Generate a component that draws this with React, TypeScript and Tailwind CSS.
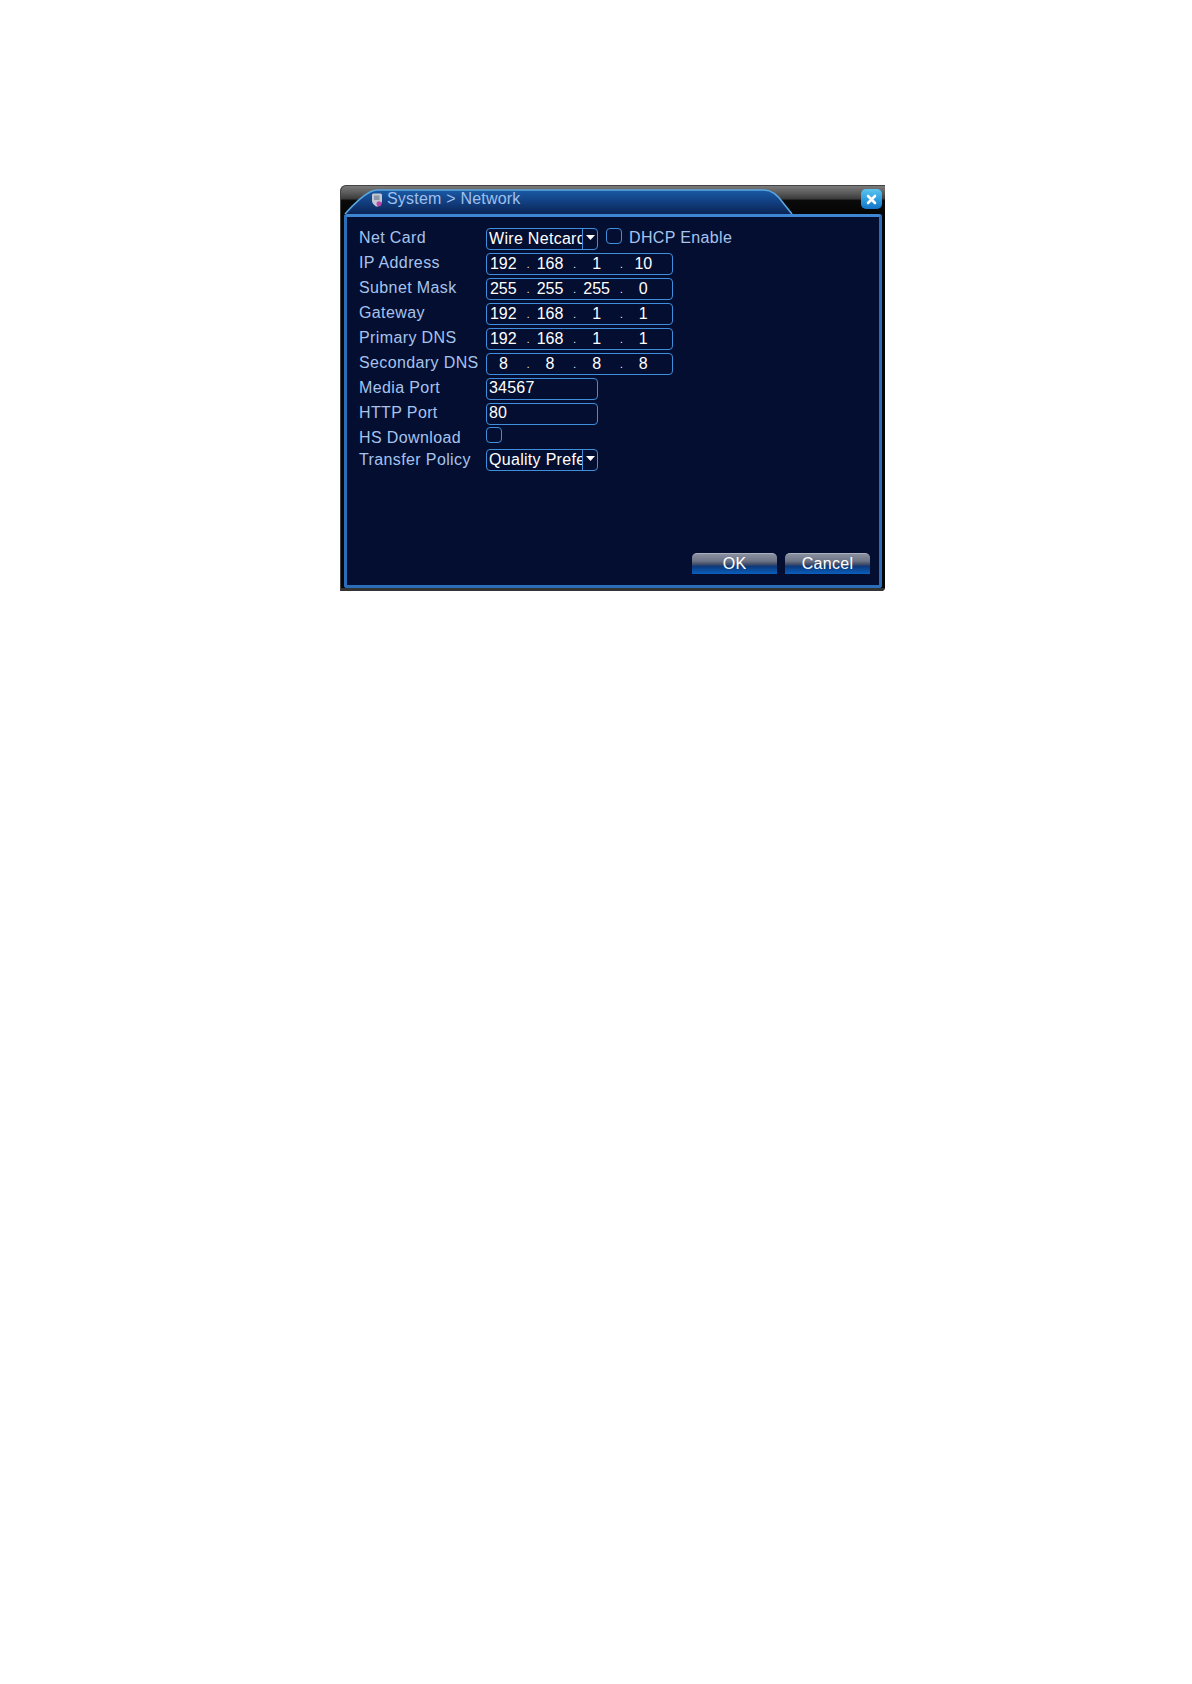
import React from "react";

const labelCls = "w-[127px] shrink-0 text-[16px] leading-[20px] tracking-[0.38px] text-[#a6c3ee] whitespace-nowrap";
const fieldCls = "h-[22px] rounded-[4px] border-[1.5px] border-[#3f8fdc] pb-[2px] text-[16px] leading-[17px] text-white";

function Select({ value }: { value: string }) {
  return (
    <div className={`${fieldCls} flex w-[112px] shrink-0 items-center`}>
      <div className="min-w-0 flex-1 overflow-hidden whitespace-nowrap pl-[2px] tracking-[0.3px]">{value}</div>
      <div className="flex h-[21px] w-[15px] shrink-0 items-center justify-center border-l border-[#3f8fdc] pb-[1px]">
        <svg width="9" height="5" viewBox="0 0 9 5"><path d="M0 0h9L4.5 5z" fill="#ffffff" /></svg>
      </div>
    </div>
  );
}

function Ip({ parts }: { parts: string[] }) {
  return (
    <div className={`${fieldCls} flex w-[187px] items-center`}>
      {parts.map((p, i) => (
        <React.Fragment key={i}>
          <div className={`w-[46.67px] shrink-0 text-center ${i === 0 ? "-ml-[7px]" : ""}`}>{p}</div>
          {i < 3 && <div className="w-0 overflow-visible pt-[4px] text-center text-[10px] leading-[14px]">.</div>}
        </React.Fragment>
      ))}
    </div>
  );
}

function Port({ value }: { value: string }) {
  return <div className={`${fieldCls} w-[112px] pl-[2px] tracking-[0.2px]`}>{value}</div>;
}

function Row({ label, children, h = "h-[22px]", labelPad = "pb-[2px]" }: { label: string; children: React.ReactNode; h?: string; labelPad?: string }) {
  return (
    <div className={`flex items-center ${h}`}>
      <div className={`${labelCls} ${labelPad}`}>{label}</div>
      {children}
    </div>
  );
}

function Check() {
  return <div className="h-[16px] w-[16px] shrink-0 rounded-[4px] border-[1.5px] border-[#3f8fdc]" />;
}

function Button({ children }: { children: React.ReactNode }) {
  return (
    <div className="h-[21px] w-[85px] rounded-t-[5px] border-t border-[#aab0bd] bg-[linear-gradient(180deg,#8a90a0_0%,#6d7487_35%,#3e4c68_52%,#0c3a7c_62%,#0a5fbe_100%)] pt-[1px] text-center text-[16px] leading-[18px] tracking-[0.3px] text-white">
      {children}
    </div>
  );
}

export default function App() {
  return (
    <div className="min-h-[1684px] bg-white pl-[340px] pt-[185px]" style={{ fontFamily: '"Liberation Sans", Arial, sans-serif' }}>
      <div className="flex h-[406px] w-[545px] flex-col overflow-hidden rounded-tl-[6px] rounded-br-[4px] border-l border-t border-[#444] bg-[#050505]">
        <div className="relative h-[28px] shrink-0 bg-[linear-gradient(180deg,#7a7a7a_0%,#5a5a5a_25%,#3c3c3c_45%,#0a0a0a_52%,#050505_100%)]">
          <svg className="absolute left-0 top-0" width="544" height="28" viewBox="0 0 544 28">
            <defs>
              <linearGradient id="tab" x1="0" y1="0" x2="0" y2="1">
                <stop offset="0" stopColor="#1a5aa6" />
                <stop offset="0.5" stopColor="#123f80" />
                <stop offset="1" stopColor="#0b2454" />
              </linearGradient>
            </defs>
            <path d="M4 28C12 19 21 10 29 6C31 5 33 4 37 4H423C431 4 437 9 443 18L451 28Z" fill="url(#tab)" />
            <path d="M4 28C12 19 21 10 29 6C31 5 33 4 37 4H423C431 4 437 9 443 18L451 28" fill="none" stroke="#5aa6e0" strokeWidth="1.6" />
          </svg>
          <div className="relative flex h-full items-start pl-[30px] pt-[3px]">
            <svg width="12" height="14" viewBox="0 0 12 14" className="mr-[4px] mt-[4px] shrink-0">
              <path d="M1 2C1 1 2 .5 3 .5H9C10 .5 11 1 11 2V8C11 10 9 12 7 13.5H5C3 12 1 10 1 8Z" fill="#c3c9d2" />
              <path d="M3 2.5H8.5V7H3Z" fill="#8a96a6" />
              <circle cx="8" cy="10.8" r="2.5" fill="#b848a8" />
            </svg>
            <div className="text-[16px] leading-[20px] tracking-[0.2px] text-[#9fc0ef]">System &gt; Network</div>
          </div>
          <div className="absolute left-[520px] top-[3px] flex h-[20px] w-[21px] items-center justify-center rounded-[5px] bg-[linear-gradient(180deg,#5cc4ee_0%,#2f9fe0_50%,#1474c8_100%)]">
            <svg width="11" height="11" viewBox="0 0 11 11"><path d="M2 2l7 7M9 2l-7 7" stroke="#ffffff" strokeWidth="2.6" strokeLinecap="round" /></svg>
          </div>
        </div>
        <div className="ml-[3px] mr-[3px] flex flex-1 flex-col rounded-[3px] border-[3px] border-[#2c6db8] border-t-[#3f86d2] bg-[#040e30] pb-[11px] pl-[12px] pr-[9px] pt-[11px]">
          <div className="flex flex-col gap-[3px]">
            <Row label="Net Card">
              <Select value="Wire Netcard" />
              <div className="mb-[6px] ml-[8px]"><Check /></div>
              <div className="ml-[7px] pb-[2px] text-[16px] leading-[20px] tracking-[0.35px] text-[#a6c3ee]">DHCP Enable</div>
            </Row>
            <Row label="IP Address"><Ip parts={["192", "168", "1", "10"]} /></Row>
            <Row label="Subnet Mask"><Ip parts={["255", "255", "255", "0"]} /></Row>
            <Row label="Gateway"><Ip parts={["192", "168", "1", "1"]} /></Row>
            <Row label="Primary DNS"><Ip parts={["192", "168", "1", "1"]} /></Row>
            <Row label="Secondary DNS"><Ip parts={["8", "8", "8", "8"]} /></Row>
            <Row label="Media Port"><Port value="34567" /></Row>
            <Row label="HTTP Port"><Port value="80" /></Row>
            <Row label="HS Download" h="h-[18px]" labelPad="pt-[2px]">
              <div className="mb-[4px]"><Check /></div>
            </Row>
            <Row label="Transfer Policy" labelPad="pb-[1px]"><Select value="Quality Prefer" /></Row>
          </div>
          <div className="mt-auto flex justify-end gap-[8px]">
            <Button>OK</Button>
            <Button>Cancel</Button>
          </div>
        </div>
        <div className="h-[3px] shrink-0 bg-[#333]" />
      </div>
    </div>
  );
}
